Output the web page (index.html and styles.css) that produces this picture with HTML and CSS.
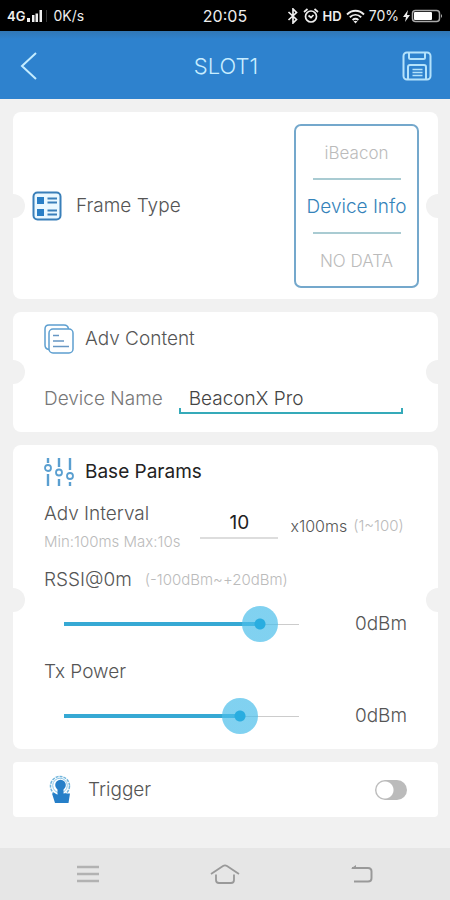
FILE: index.html
```html
<!DOCTYPE html>
<html lang="en">
<head>
<meta charset="utf-8">
<meta name="viewport" content="width=device-width, initial-scale=1">
<title>SLOT1</title>
<link rel="stylesheet" href="styles.css">
</head>
<body>
<div class="status">
  <div class="status-left">
    <span class="net">4G</span>
    <svg width="16" height="12" viewBox="0 0 16 12" fill="#eee" aria-hidden="true"><path d="M0 8h3v4H0zM5 5h2.500v7H5zM8.500 3.500H11V12H8.500zM12.500 0H15v12h-2.500z"/></svg>
    <span class="divider"></span>
    <span>0K/s</span>
  </div>
  <span class="clock">20:05</span>
  <div class="status-right">
    <svg width="12" height="16" viewBox="0 0 12 16" fill="none" stroke="#eee" stroke-width="1.700" aria-hidden="true"><path d="M1.500 4l8 7.500L6 15V1l3.500 3.500-8 7.500"/></svg>
    <svg width="16" height="16" viewBox="0 0 16 16" fill="none" stroke="#eee" stroke-width="1.700" aria-hidden="true"><circle cx="8" cy="8.500" r="5.500"/><path d="M1 4l3.500-3M15 4l-3.500-3M5.500 7.500L8 9.500 10.500 7"/></svg>
    <span class="hd">HD</span>
    <svg width="19" height="15" viewBox="0 0 19 15" fill="none" stroke="#eee" stroke-width="1.900" aria-hidden="true"><path d="M1 5.500C6 .5 13 .5 18 5.500M3.800 8.300c3.500-3.300 7.900-3.300 11.400 0M6.600 11c1.900-1.600 3.900-1.600 5.800 0"/><path d="M7.500 12.300L9.500 14.500l2-2.200q-2-1.200-4 0z" fill="#eee" stroke="none"/></svg>
    <span class="percent">70%</span>
    <svg width="40" height="14" viewBox="0 0 40 14" fill="none" aria-hidden="true"><path d="M5 1L0 8h3l-1 5 5-7H4z" fill="#eee"/><rect x="9.500" y="1.500" width="27" height="11" rx="3" stroke="#aaa" stroke-width="1.500"/><rect x="11" y="3" width="18" height="8" rx="1" fill="#fff"/><path d="M38 5q2 2 0 4z" fill="#bbb"/></svg>
  </div>
</div>

<header class="bar">
  <button class="icon-button" type="button" aria-label="Back">
    <svg width="18" height="28" viewBox="0 0 18 28" fill="none" stroke="#c4ecff" stroke-width="2"><path d="M16 1L2 14l14 13"/></svg>
  </button>
  <h1>SLOT1</h1>
  <button class="icon-button end" type="button" aria-label="Save">
    <svg width="30" height="30" viewBox="0 0 30 30" fill="none" stroke="#b4e2fb" stroke-width="2"><rect x="1.500" y="1.500" width="27" height="27" rx="3.500"/><path d="M7 2v4.500q0 1.500 1.500 1.500h13q1.500 0 1.500-1.500V2M6 28V16q0-2 2-2h14q2 0 2 2v12"/><path d="M10.500 18.500h10M10.500 21.500h10M10.500 24.500h10" stroke-width="1.700"/></svg>
  </button>
</header>

<main class="content">
  <section class="card notched frame-card">
    <div class="heading">
      <svg width="30" height="30" viewBox="0 0 30 30" fill="none" aria-hidden="true"><rect x="1.500" y="1.500" width="27" height="27" rx="4" fill="#eaf8ff" stroke="#397fb9" stroke-width="2"/><path d="M5 6h7v7H5zM5 18h7v7H5z" fill="#2a7fc6"/><path d="M15.500 7.500H25M15.500 11.500H25M15.500 19.500H25M15.500 23.500H25" stroke="#397fb9" stroke-width="2"/></svg>
      <h2>Frame Type</h2>
    </div>
    <div class="picker" role="group" aria-label="Frame Type">
      <button type="button">iBeacon</button>
      <hr>
      <button type="button" class="selected" aria-pressed="true">Device Info</button>
      <hr>
      <button type="button">NO DATA</button>
    </div>
  </section>

  <section class="card notched adv-card">
    <div class="heading">
      <svg width="30" height="30" viewBox="0 0 30 30" fill="none" stroke="#5d9fd0" stroke-width="1.500" aria-hidden="true"><path d="M5 25.500Q1 25 1 21V5q0-4 4-4h15q4 0 4.500 4"/><rect x="5" y="5" width="24" height="24" rx="4"/><path d="M9 11.500h6M9 17h11M9 22.500h16" stroke="#6797c4"/></svg>
      <h2>Adv Content</h2>
    </div>
    <div class="name-row">
      <label for="device-name">Device Name</label>
      <input id="device-name" type="text" value="BeaconX Pro">
    </div>
  </section>

  <section class="card notched base-card">
    <div class="heading">
      <svg width="30" height="30" viewBox="0 0 30 30" fill="none" stroke="#5a9fd0" stroke-width="1.800" aria-hidden="true"><path d="M4 1v5M4 17v12M15 1v9M15 22v7M26 1v12M26 25v4" stroke-width="2.400"/><circle cx="4" cy="11" r="3"/><circle cx="15" cy="15.500" r="3"/><circle cx="26" cy="19" r="3"/></svg>
      <h2 class="strong">Base Params</h2>
    </div>
    <div class="interval-row">
      <div class="interval-label">
        <label for="interval">Adv Interval</label>
        <small>Min:100ms Max:10s</small>
      </div>
      <input id="interval" type="text" inputmode="numeric" value="10">
      <div class="range-note">
        <span class="unit">x100ms</span>
        <small>(1~100)</small>
      </div>
    </div>
    <div class="param">
      <div class="param-label"><label for="rssi">RSSI@0m</label><small>(-100dBm~+20dBm)</small></div>
      <div class="slider-row">
        <input id="rssi" type="range" min="-100" max="20" value="0" style="--fill: 0.833">
        <output for="rssi">0dBm</output>
      </div>
    </div>
    <div class="param">
      <div class="param-label"><label for="tx">Tx Power</label></div>
      <div class="slider-row">
        <input id="tx" type="range" min="0" max="8" value="6" style="--fill: 0.75">
        <output for="tx">0dBm</output>
      </div>
    </div>
  </section>

  <section class="card trigger-card">
    <div class="heading">
      <svg width="24" height="30" viewBox="0 0 24 30" fill="none" aria-hidden="true"><circle cx="12" cy="11" r="9.500" stroke="#72b5dc" stroke-width="1.500" stroke-dasharray="3 1"/><circle cx="12" cy="10.500" r="7.300" stroke="#8ec8e8"/><circle cx="12.500" cy="10" r="5.300" fill="#267fc8"/><path d="M9.500 10h6v8.500h6.500L20.500 28H7L4 18.500l2.500-.5 3 2z" fill="#267fc8"/></svg>
      <label for="trigger">Trigger</label>
    </div>
    <input id="trigger" class="switch" type="checkbox" role="switch">
  </section>
</main>

<nav class="system-nav" aria-label="System">
  <button type="button" aria-label="Menu"><svg width="22" height="20" viewBox="0 0 22 20" stroke="#b2b2b2" stroke-width="2.500"><path d="M0 3h22M0 10h22M0 17h22"/></svg></button>
  <button type="button" aria-label="Home"><svg width="30" height="22" viewBox="0 0 30 22" fill="none" stroke="#999" stroke-width="1.800"><path d="M1 11L13 3q2-1.300 4 0l12 8M6 11.500V17q0 3 3 3h12q3 0 3-3v-5.500"/></svg></button>
  <button type="button" aria-label="Return"><svg width="22" height="20" viewBox="0 0 22 20" fill="none" stroke="#999" stroke-width="2"><path d="M1 4h16q3.500 0 3.500 3.500V14q0 3.500-3.500 3.500H3"/><path d="M0 4.500L5 1v4z" fill="#999" stroke="none"/></svg></button>
</nav>
</body>
</html>
```
FILE: styles.css
```css
* {
  box-sizing: border-box;
}

body {
  margin: 0;
  min-height: 100vh;
  display: flex;
  flex-direction: column;
  background: #f1f1f1;
  color: #555;
  font-family: Inter, Roboto, sans-serif;
  font-size: 19px;
  font-weight: 300;
  line-height: 28px;
}

h1, h2 {
  margin: 0;
  font-size: inherit;
  font-weight: inherit;
}

button {
  padding: 0;
  border: 0;
  background: none;
  color: inherit;
  font: inherit;
}

svg {
  display: block;
  flex: none;
}

small {
  color: #bbb;
  font-size: 15px;
}

input {
  font: inherit;
}

.status {
  display: grid;
  grid-template-columns: 1fr auto 1fr;
  align-items: center;
  height: 31px;
  padding: 1px 7px 0;
  background: #000;
  color: #eee;
  font-size: 14px;
  font-weight: 400;
}

.status-left, .status-right {
  display: flex;
  align-items: center;
}

.status-left {
  gap: 2px;
}

.status-right {
  justify-content: flex-end;
  gap: 4px;
}

.net, .hd {
  font-size: 13px;
  font-weight: 600;
}

.divider {
  width: 1px;
  height: 12px;
  margin: 0 4px 0 1px;
  background: #333;
}

.clock {
  font-size: 16px;
}

.bar {
  display: grid;
  grid-template-columns: 1fr auto 1fr;
  align-items: center;
  height: 68px;
  padding: 1px 18px 0 20px;
  background: linear-gradient(#3177b5, #2e82ce 8px);
  color: #c8edff;
}

.bar h1 {
  font-size: 22px;
}

.icon-button {
  justify-self: start;
}

.icon-button.end {
  justify-self: end;
}

.content {
  flex: 1;
  display: flex;
  flex-direction: column;
  gap: 13px;
  padding: 13px 12px 31px 13px;
}

.card {
  position: relative;
  border-radius: 8px;
  background: #fff;
}

.notched::before, .notched::after {
  content: "";
  position: absolute;
  top: calc(50% - 12px);
  width: 24px;
  height: 24px;
  border-radius: 50%;
  background: #f1f1f1;
}

.notched::before {
  left: -12px;
}

.notched::after {
  right: -12px;
}

.heading {
  display: flex;
  align-items: center;
  gap: 11px;
  height: 36px;
}

.heading .strong {
  color: #222;
  font-weight: 400;
}

.frame-card {
  display: flex;
  align-items: center;
  justify-content: space-between;
  padding: 12px 19px 11px;
}

.frame-card .heading {
  gap: 14px;
}

.picker {
  width: 125px;
  border: 2px solid #74a8cc;
  border-radius: 7px;
}

.picker button {
  display: block;
  width: 100%;
  height: 52px;
  padding-top: 2px;
  color: #bbb;
  font-size: 17px;
}

.picker .selected {
  color: #3583ba;
  font-size: 19px;
}

.picker hr {
  width: 88px;
  height: 2px;
  margin: 0 auto;
  border: 0;
  background: #a9cbd2;
}

.adv-card {
  padding: 9px 35px 18px 31px;
}

.name-row {
  display: flex;
  align-items: center;
  gap: 16px;
  margin-top: 27px;
  color: #777;
}

.name-row input {
  flex: 1;
  min-width: 0;
  height: 30px;
  padding: 0 10px;
  border: 0;
  border-bottom: 2px solid #35aab9;
  background: linear-gradient(#35aab9, #35aab9) left bottom / 2px 4px no-repeat,
    linear-gradient(#35aab9, #35aab9) right bottom / 2px 4px no-repeat;
  color: #444;
}

.base-card {
  padding: 9px 31px 15px;
}

.base-card::before, .base-card::after {
  top: 143px;
}

.interval-row {
  display: flex;
  align-items: flex-start;
  margin-top: 10px;
}

.interval-label {
  display: flex;
  flex-direction: column;
}

#interval {
  width: 78px;
  height: 39px;
  margin: 0 12px 0 20px;
  padding: 8px 0 0;
  border: 0;
  border-bottom: 2px solid #ddd;
  background: none;
  color: #222;
  font-weight: 400;
  text-align: center;
}

.range-note {
  display: flex;
  align-items: center;
  gap: 6px;
  padding-top: 12px;
}

.unit {
  font-size: 16px;
}

.param {
  margin-top: 10px;
}

.param + .param {
  margin-top: 16px;
}

.param-label {
  display: flex;
  align-items: center;
  gap: 13px;
}

.slider-row {
  display: flex;
  align-items: center;
  justify-content: space-between;
  margin-top: 12px;
}

input[type="range"] {
  flex: 0 1 271px;
  min-width: 0;
  height: 36px;
  margin: 0 0 0 2px;
  appearance: none;
  background: none;
}

input[type="range"]::-webkit-slider-runnable-track {
  height: 36px;
  background: linear-gradient(#36a9d4, #36a9d4) 18px center / calc((100% - 36px) * var(--fill)) 4px no-repeat,
    linear-gradient(#ccc, #ccc) 18px center / calc(100% - 36px) 1px no-repeat;
}

input[type="range"]::-webkit-slider-thumb {
  appearance: none;
  width: 36px;
  height: 36px;
  border-radius: 50%;
  background: radial-gradient(circle, #29ade0 5px, rgba(75, 190, 234, 0.7) 6px);
}

.trigger-card {
  display: flex;
  align-items: center;
  justify-content: space-between;
  height: 55px;
  padding: 0 31px 0 35px;
  border-radius: 4px;
}

.trigger-card .heading {
  gap: 16px;
}

.switch {
  appearance: none;
  width: 32px;
  height: 20px;
  margin: 0;
  border-radius: 10px;
  background: radial-gradient(circle at 10px 10px, #fff 8px, #bbb 9px);
}

.system-nav {
  display: grid;
  grid-template-columns: repeat(3, 1fr);
  align-items: center;
  height: 52px;
  padding: 0 19px;
  background: #e6e6e6;
}

.system-nav button {
  justify-self: center;
}
```
